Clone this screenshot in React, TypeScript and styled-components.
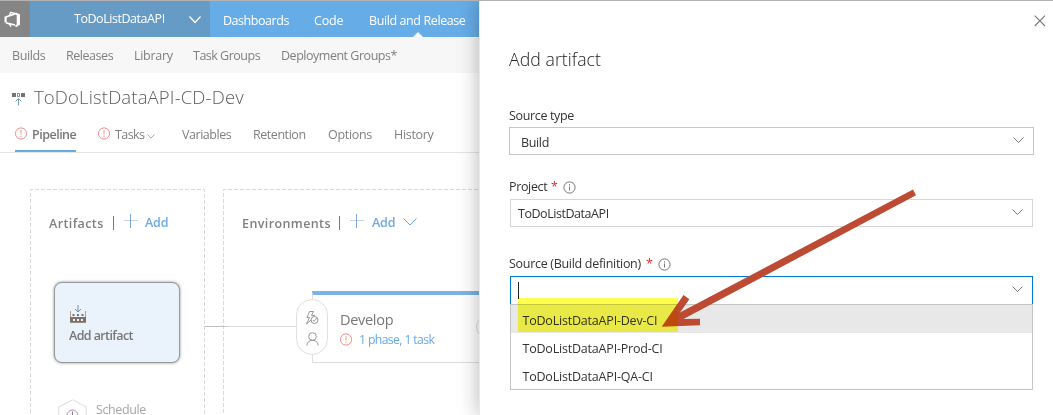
import React from 'react';
import styled, { createGlobalStyle } from 'styled-components';

const Global = createGlobalStyle`
  * { box-sizing: border-box; }
  body { margin: 0; overflow: hidden; background: #fff; font-family: "Open Sans", "Noto Sans", sans-serif; }
  svg { display: block; flex: none; }
`;

const Page = styled.div`
  position: relative;
  display: flex;
  width: 1053px;
  height: 415px;
  overflow: hidden;
  border-top: 1px solid #b3b1b1;
`;

const Text = styled.span<{ $size?: number; $w?: number; $color?: string; $spacing?: number; $weight?: number }>`
  display: block;
  flex: none;
  white-space: nowrap;
  width: ${p => (p.$w ? `${p.$w}px` : 'auto')};
  font-size: ${p => p.$size ?? 12.5}px;
  font-weight: ${p => p.$weight ?? 400};
  letter-spacing: ${p => p.$spacing ?? 0}px;
  color: ${p => p.$color ?? '#808080'};
  line-height: 20px;
`;

const Workspace = styled.div`
  display: flex;
  flex-direction: column;
  width: 479px;
  flex: none;
  height: 414px;
  overflow: hidden;
`;

const TopBar = styled.header`
  display: flex;
  height: 36px;
  flex: none;
  background: #66ade8;
`;

const Logo = styled.div`
  width: 30px;
  padding: 10px 0 0 3px;
  background: #858585;
`;

const ProjectPicker = styled.div`
  display: flex;
  width: 180px;
  padding: 8px 0 0 44px;
  background: #669bc6;
`;

const TopNav = styled.nav`
  display: flex;
  gap: 25px;
  padding: 10px 0 0 13px;
`;

const TopNavItem = styled.div`
  display: flex;
  flex-direction: column;
  align-items: center;
  height: 26px;
  justify-content: space-between;
`;

const Notch = styled.i`
  border: 5.5px solid transparent;
  border-top: 0;
  border-bottom: 5px solid #f7f7f7;
`;

const SubNav = styled.nav`
  display: flex;
  gap: 21px;
  height: 36px;
  flex: none;
  padding: 9px 0 0 12px;
  background: #f7f7f7;
`;

const TitleRow = styled.div`
  display: flex;
  gap: 9px;
  padding: 14px 0 0 12px;
  height: 42px;
  flex: none;
`;

const TitleIcon = styled.div`
  padding-top: 6px;
`;

const Tabs = styled.div`
  display: flex;
  height: 38px;
  flex: none;
  padding-left: 15px;
  border-bottom: 1px solid #e4e4e4;
`;

const Tab = styled.div<{ $w: number; $gap: number; $active?: boolean }>`
  display: flex;
  gap: 4px;
  width: ${p => p.$w}px;
  margin-right: ${p => p.$gap}px;
  padding-top: 10px;
  height: 37px;
  border-bottom: ${p => (p.$active ? '2px solid #66ade8' : '0')};
`;

const IconSlot = styled.div<{ $top?: number; $left?: number }>`
  flex: none;
  padding: ${p => p.$top ?? 0}px 0 0 ${p => p.$left ?? 0}px;
`;

const Canvas = styled.main`
  display: flex;
  gap: 18px;
  padding: 36px 0 0 30px;
  height: 262px;
`;

const Zone = styled.section<{ $w: number }>`
  position: relative;
  width: ${p => p.$w}px;
  height: 260px;
  flex: none;
  padding-left: 18px;
`;

const DashedFrame = styled.svg`
  position: absolute;
  left: 0;
  top: 0;
`;

const ZoneHead = styled.div`
  display: flex;
  height: 93px;
  padding-top: 24px;
`;

const Divider = styled.i<{ $left: number }>`
  width: 1px;
  height: 14px;
  margin: 3px 10px 0 ${p => p.$left}px;
  background: #777;
`;

const ArtifactCard = styled.div`
  width: 126px;
  height: 81px;
  margin-left: 6px;
  padding: 21px 0 0 14px;
  border: 1px solid #999;
  border-radius: 8px;
  background: #eaf3fb;
  box-shadow: 0 0 3px rgba(0, 0, 0, 0.45);
`;

const Schedule = styled.div`
  display: flex;
  gap: 9px;
  padding: 36px 0 0 10px;
`;

const Environment = styled.div`
  display: flex;
  align-items: flex-start;
  height: 72px;
  width: 200px;
  border: 1px solid #dcdcdc;
  border-top: 4px solid #7ab3e5;
  margin: 9px 0 0 71px;
`;

const Conditions = styled.div`
  display: flex;
  flex-direction: column;
  align-items: center;
  gap: 7px;
  flex: none;
  width: 32px;
  height: 56px;
  margin: 4px 0 0 -17px;
  padding-top: 11px;
  border: 1px solid #e0e0e0;
  border-radius: 16px;
  background: #fff;
`;

const EnvInfo = styled.div`
  flex: none;
  width: 148px;
  padding: 15px 0 0 12px;
`;

const EnvStatus = styled.div`
  display: flex;
  gap: 6px;
`;

const PostCondition = styled.div`
  width: 28px;
  height: 24px;
  flex: none;
  margin-top: 20px;
  border: 1px solid #ddd;
  border-radius: 12px;
`;

const Connector = styled.i`
  position: absolute;
  left: 205px;
  top: 325px;
  width: 91px;
  height: 1px;
  background: linear-gradient(90deg, #bfbfbf 22px, #dcdcdc 22px);
`;

const Panel = styled.aside`
  position: relative;
  width: 574px;
  height: 414px;
  padding: 12px 0 0 29px;
  border-left: 1px solid #eaeaea;
  background: #fff;
  box-shadow: -1px 0 19px rgba(0, 0, 0, 0.27);
`;

const CloseRow = styled.div`
  display: flex;
  justify-content: flex-end;
  height: 36px;
  padding: 2px 7px 0 0;
`;

const SourceLabel = styled.div`
  display: flex;
  height: 21px;
  margin-top: 37px;
`;

const FieldLabel = styled.div<{ $top: number }>`
  display: flex;
  height: 20px;
  margin-top: ${p => p.$top}px;
`;

const Select = styled.div<{ $tone: string; $inset?: boolean; $pad: number; $h: number; $top?: number }>`
  display: flex;
  justify-content: space-between;
  width: ${p => (p.$inset ? 523 : 525)}px;
  height: ${p => p.$h}px;
  margin: ${p => p.$top ?? 2}px 0 0 ${p => (p.$inset ? 1 : 0)}px;
  padding: 4px 9px 0 ${p => p.$pad}px;
  border: 1px solid ${p => p.$tone};
`;

const Caret = styled.i`
  width: 1px;
  height: 17px;
  margin-top: 1px;
  background: #222;
`;

const Options = styled.div`
  position: relative;
  width: 523px;
  height: 86px;
  margin: -1px 0 0 1px;
  border: 1px solid #c3c5c5;
  background: #fff;
`;

const Option = styled.div<{ $active?: boolean }>`
  height: 28px;
  padding: 6px 0 0 11.5px;
  background: ${p => (p.$active ? '#e8e8e8' : '#fff')};
`;

const Highlighter = styled.div`
  position: absolute;
  left: 518px;
  top: 297px;
  width: 160px;
  height: 34px;
  background: #ffff4d;
  mix-blend-mode: multiply;
`;

const Arrow = styled.svg`
  position: absolute;
  left: 0;
  top: -1px;
`;

const Chevron = ({ w = 11, h = 5.5, color = '#777', sw = 1 }: { w?: number; h?: number; color?: string; sw?: number }) => (
  <svg width={w} height={h + 1} fill="none" stroke={color} strokeWidth={sw}>
    <path d={`M.5 .5 L${w / 2} ${h} L${w - 0.5} .5`} />
  </svg>
);

const Alert = () => (
  <svg width="13" height="13" fill="none" stroke="#ea8080">
    <circle cx="6" cy="6.5" r="5.6" strokeWidth=".9" />
    <path d="M6 3v4.500M6 8.600v1.400" stroke="#efa08a" />
  </svg>
);

const Info = () => (
  <svg width="13" height="13" fill="none" stroke="#666">
    <circle cx="6.5" cy="6.5" r="5.6" strokeWidth=".9" />
    <path d="M6.5 5.500v4M6.500 3.200v1.300" stroke="#777" />
  </svg>
);

const Plus = () => (
  <svg width="15" height="15" fill="none">
    <path d="M0 6.500h14" stroke="#c3d6ee" />
    <path d="M6.500 0v14" stroke="#7aa6de" />
  </svg>
);

export default function App() {
  return (
    <Page>
      <Global />
      <Workspace>
        <TopBar>
          <Logo>
            <svg width="19" height="18" viewBox="0 0 19 18" fill="none" stroke="#fff" strokeLinejoin="round">
              <path d="M2.800 6 12 2.800M3 11.800 12 14" strokeWidth="1.8" />
              <path d="M2.600 5.500v6" strokeWidth="2.200" />
              <path d="M12.500 2.300 15.800 3.800v9.400l-3.300 2.300" strokeWidth="2" />
              <path d="M15.200 3.500v10.500" strokeWidth="3" />
              <path d="M6.500 4.500 7.500 1.400 13 2.800M6 12.500l2 3.200" strokeWidth="1.400" />
            </svg>
          </Logo>
          <ProjectPicker>
            <Text $w={115} $color="#fff" $spacing={-0.45}>ToDoListDataAPI</Text>
            <IconSlot $top={7}><Chevron w={12} h={6.5} color="#fff" sw={1.3} /></IconSlot>
          </ProjectPicker>
          <TopNav>
            <Text $w={66} $color="#fff" $spacing={-0.45}>Dashboards</Text>
            <Text $w={30} $color="#fff" $spacing={-0.2}>Code</Text>
            <TopNavItem>
              <Text $w={97} $color="#fff" $spacing={-0.4}>Build and Release</Text>
              <Notch />
            </TopNavItem>
          </TopNav>
        </TopBar>
        <SubNav>
          <Text $w={33} $spacing={-0.4}>Builds</Text>
          <Text $w={47} $spacing={-0.45}>Releases</Text>
          <Text $w={38} $spacing={-0.3}>Library</Text>
          <Text $w={67} $spacing={-0.5}>Task Groups</Text>
          <Text $spacing={-0.48}>Deployment Groups*</Text>
        </SubNav>
        <TitleRow>
          <TitleIcon>
            <svg width="13" height="13" fill="none">
              <path d="M0 0h4v4H0zM9 0h4v4H9z" fill="#77717a" />
              <path d="M5.500 .5h2v3h-2z" stroke="#888" />
              <path d="M6.500 12.500V6M3.500 8.500l3-3 3 3" stroke="#7a9bb5" />
            </svg>
          </TitleIcon>
          <Text $size={18.5} $weight={300} $color="#5c5c5c" $spacing={0.15}>ToDoListDataAPI-CD-Dev</Text>
        </TitleRow>
        <Tabs>
          <Tab $w={61} $gap={22} $active>
            <IconSlot $top={2}><Alert /></IconSlot>
            <Text $weight={600} $spacing={-0.5} $color="#777">Pipeline</Text>
          </Tab>
          <Tab $w={58} $gap={26}>
            <IconSlot $top={2}><Alert /></IconSlot>
            <Text $w={28} $spacing={-0.6}>Tasks</Text>
            <IconSlot $top={9}><Chevron w={8} h={4} color="#aaa" /></IconSlot>
          </Tab>
          <Tab $w={50} $gap={21}><Text $spacing={-0.45}>Variables</Text></Tab>
          <Tab $w={53} $gap={22}><Text $spacing={-0.45}>Retention</Text></Tab>
          <Tab $w={44} $gap={22}><Text $spacing={-0.3}>Options</Text></Tab>
          <Tab $w={40} $gap={0}><Text $spacing={-0.3}>History</Text></Tab>
        </Tabs>
        <Canvas>
          <Zone $w={175}>
            <DashedFrame width="175" height="260" fill="none" stroke="#d9d9d9" strokeDasharray="4 2">
              <path d="M.5 260V.5H174.500V260" />
            </DashedFrame>
            <ZoneHead>
              <IconSlot $top={1} $left={1}><Text $w={56} $weight={600} $spacing={0.4}>Artifacts</Text></IconSlot>
              <Divider $left={8} />
              <IconSlot $top={1}><Plus /></IconSlot>
              <IconSlot $left={6}><Text $weight={600} $spacing={-0.2} $color="#6faae6">Add</Text></IconSlot>
            </ZoneHead>
            <ArtifactCard>
              <svg width="18" height="21" fill="none">
                <path d="M1.500 7v11.500h15V7" stroke="#b9a078" />
                <path d="M1 13h16v5.500H1z" fill="#787272" />
                <path d="M3.500 10h2v2h-2zM8 10h2v2H8zM12.500 10h2v2h-2z" fill="#787272" />
                <path d="M4 15h2v2H4zM8 15h2v2H8zM12 15h2v2h-2z" fill="#eaf3fb" />
                <path d="M9 1v7M6 5l3 3 3-3" stroke="#6f8fa8" />
              </svg>
              <IconSlot $top={1}><Text $weight={600} $spacing={-0.6} $color="#777">Add artifact</Text></IconSlot>
            </ArtifactCard>
            <Schedule>
              <svg width="29" height="32" fill="none">
                <path d="M14.500 .8 28.200 8v16L14.500 31.200 .8 24V8z" stroke="#dcdcdc" />
                <circle cx="14.500" cy="16.500" r="5.500" stroke="#999" />
                <path d="M14.500 12.500v4.500h3" stroke="#a06fa0" />
              </svg>
              <IconSlot $top={1}><Text $color="#a6a6a6" $spacing={-0.4}>Schedule</Text></IconSlot>
            </Schedule>
          </Zone>
          <Zone $w={270}>
            <DashedFrame width="270" height="260" fill="none" stroke="#d9d9d9" strokeDasharray="4 2">
              <path d="M.5 260V.5H270" />
            </DashedFrame>
            <ZoneHead>
              <IconSlot $top={1} $left={1}><Text $w={90} $weight={600} $spacing={0.4}>Environments</Text></IconSlot>
              <Divider $left={7} />
              <IconSlot $top={1}><Plus /></IconSlot>
              <IconSlot $left={7}><Text $w={24} $weight={600} $spacing={-0.2} $color="#6faae6">Add</Text></IconSlot>
              <IconSlot $top={5} $left={7}><Chevron w={14} h={7} color="#6ca6e2" /></IconSlot>
            </ZoneHead>
            <Environment>
              <Conditions>
                <svg width="14" height="14" fill="none" stroke="#8c8c8c" strokeWidth=".9">
                  <path d="M8.500 .5h-4L2 6.500h2.500L1.500 13 6 9M8.500 .5 6.500 4.500h3.500" />
                  <circle cx="9.500" cy="9" r="3.500" />
                  <path d="m7.800 9 1.300 1.400 2.600-3.200" />
                </svg>
                <svg width="13" height="14" fill="none" stroke="#8c8c8c" strokeWidth=".9">
                  <circle cx="6.500" cy="4.500" r="3.800" />
                  <path d="M.8 13.500c.3-3.400 2.600-5.200 5.700-5.200s5.400 1.800 5.700 5.200" />
                </svg>
              </Conditions>
              <EnvInfo>
                <Text $size={14.5} $color="#777" $spacing={-0.3}>Develop</Text>
                <EnvStatus>
                  <IconSlot $top={3}><Alert /></IconSlot>
                  <Text $size={12.2} $color="#66a9e6" $weight={500} $spacing={-0.6}>1 phase, 1 task</Text>
                </EnvStatus>
              </EnvInfo>
              <PostCondition />
            </Environment>
          </Zone>
        </Canvas>
      </Workspace>
      <Connector />
      <Panel>
        <CloseRow>
          <svg width="12" height="12" stroke="#777" strokeWidth="1.1"><path d="m.7.7 10.300 10.300M11 .7.7 11" /></svg>
        </CloseRow>
        <Text $size={17.7} $color="#222" $weight={300} $spacing={0.05}>Add artifact</Text>
        <SourceLabel><Text $color="#333" $spacing={-0.35}>Source type</Text></SourceLabel>
        <Select $tone="#c6c6c6" $pad={11} $h={28} $top={0}>
          <IconSlot $top={1}><Text $color="#333" $spacing={-0.35}>Build</Text></IconSlot>
          <IconSlot $top={5}><Chevron /></IconSlot>
        </Select>
        <FieldLabel $top={22}>
          <Text $w={42} $color="#333" $spacing={-0.35}>Project</Text>
          <Text $w={11.5} $color="#d13438">*</Text>
          <IconSlot $top={4}><Info /></IconSlot>
        </FieldLabel>
        <Select $tone="#d6d6d6" $pad={7} $h={28} $inset>
          <Text $color="#333" $spacing={-0.45}>ToDoListDataAPI</Text>
          <IconSlot $top={5}><Chevron /></IconSlot>
        </Select>
        <FieldLabel $top={27}>
          <Text $w={137} $color="#333" $spacing={-0.3}>Source (Build definition)</Text>
          <Text $w={11.5} $color="#d13438">*</Text>
          <IconSlot $top={4}><Info /></IconSlot>
        </FieldLabel>
        <Select $tone="#0078d7" $pad={7} $h={29} $inset>
          <Caret />
          <IconSlot $top={5}><Chevron /></IconSlot>
        </Select>
        <Options>
          <Option $active><Text $color="#333" $spacing={-0.2}>ToDoListDataAPI-Dev-CI</Text></Option>
          <Option><Text $color="#333" $spacing={-0.2}>ToDoListDataAPI-Prod-CI</Text></Option>
          <Option><Text $color="#333" $spacing={-0.2}>ToDoListDataAPI-QA-CI</Text></Option>
        </Options>
      </Panel>
      <Arrow width="1053" height="415">
        <path d="M661.700 326.700 683.500 295l5.800 4.300-9.300 13.200L913 189.500l3 5.800L683.500 319l16.500-.3v6.600z" fill="#bd4a32" />
      </Arrow>
      <Highlighter />
    </Page>
  );
}
